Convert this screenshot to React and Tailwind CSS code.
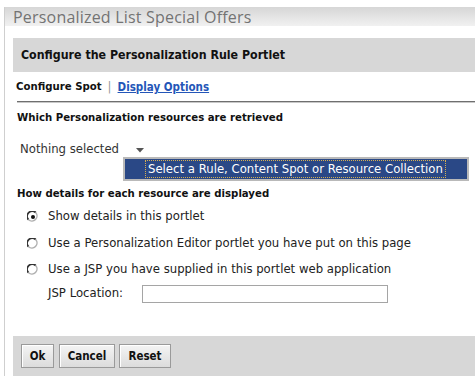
import React from "react";

function Radio({ checked }) {
  return (
    <svg width="12" height="12" viewBox="0 0 12 12" className="shrink-0">
      <circle cx="6" cy="6" r="5.5" fill="#fff" />
      <path d="M1.5 8.7 A5.1 5.1 0 0 1 8.7 1.5" fill="none" stroke="#333" strokeWidth="1.8" />
      <path d="M8.7 1.5 A5.1 5.1 0 0 1 1.5 8.7" fill="none" stroke="#b0b0b0" strokeWidth="1.5" />
      {checked && <circle cx="6" cy="6" r="2" fill="#111" />}
    </svg>
  );
}

function Btn({ children, w }) {
  return (
    <button
      className={`${w} h-[24px] border border-[#9a9a9a] bg-gradient-to-b from-[#f4f4f4] to-[#dcdcdc] text-[11.5px] font-bold text-[#111] leading-[22px] shadow-[inset_1px_1px_0_#fff] font-['DejaVu_Sans_Condensed','DejaVu_Sans',sans-serif]`}
    >
      {children}
    </button>
  );
}

const bold = "font-bold font-['DejaVu_Sans_Condensed','DejaVu_Sans',sans-serif] text-[11.3px]";

export default function App() {
  return (
    <div className="w-[475px] h-[376px] overflow-hidden bg-white font-['DejaVu_Sans',sans-serif] text-[11.7px] text-[#222]">
      <div className="mt-[7px] ml-[4px] border-l border-[#cfcfcf] h-[369px] flex flex-col">
        <div className="h-[20px] bg-gradient-to-b from-[#d6d6d6] to-[#f1f1f1] border-b border-white pl-[8px] text-[16px] leading-[20px] text-[#737373] font-['Open_Sans','DejaVu_Sans',sans-serif] tracking-[0.2px]">
          Personalized List Special Offers
        </div>
        <div className="pl-[8px] flex flex-col flex-1">
          <div className="mt-[11px] h-[34px] bg-[#d7d7d7] flex items-center pl-[8px] font-bold font-['DejaVu_Sans_Condensed','DejaVu_Sans',sans-serif] text-[12.3px] text-[#111]">
            Configure the Personalization Rule Portlet
          </div>
          <div className="h-[29px] flex items-center pl-[3px] gap-[6px] pt-[2px]">
            <span className={`${bold} text-[#111]`}>Configure Spot</span>
            <span className="text-[#999]">|</span>
            <span className={`${bold} text-[11.5px] text-[#2456b8] underline`}>Display Options</span>
          </div>
          <div className="ml-[4px] h-[2px] border-t border-[#6f6f6f] border-b border-b-[#c8c8c8]" />
          <div className={`h-[28px] flex items-center pl-[4px] pt-[3px] ${bold} text-[#111]`}>
            Which Personalization resources are retrieved
          </div>
          <div className="mt-[6px] h-[20px] flex items-center pl-[7px] pt-[6px]">
            <span className="text-[#333]">Nothing selected</span>
            <svg width="8" height="5" viewBox="0 0 8 5" className="ml-[17px]">
              <path d="M0 0 H8 L4 4.5 Z" fill="#555" />
            </svg>
          </div>
          <div className="ml-[110px] h-[24px] w-[346px] border-2 border-[#b9b9b9] bg-[#2a4886] flex items-center pl-[20px]">
            <span className="border border-dotted border-[#d8b050] px-[2px] h-[18px] leading-[16px] text-white whitespace-nowrap">
              Select a Rule, Content Spot or Resource Collection
            </span>
          </div>
          <div className={`h-[20px] flex items-center pl-[4px] pt-[6px] ${bold} text-[#111]`}>
            How details for each resource are displayed
          </div>
          <div className="mt-[3px] flex flex-col pl-[14px]">
            <div className="h-[26px] flex items-center gap-[9px]">
              <Radio checked />
              <span>Show details in this portlet</span>
            </div>
            <div className="h-[27px] flex items-center gap-[9px]">
              <Radio />
              <span>Use a Personalization Editor portlet you have put on this page</span>
            </div>
            <div className="h-[26px] flex items-center gap-[9px]">
              <Radio />
              <span>Use a JSP you have supplied in this portlet web application</span>
            </div>
            <div className="h-[22px] flex items-center pl-[21px]">
              <span className="w-[94px]">JSP Location:</span>
              <div className="w-[246px] h-[18px] border border-[#a5a5a5] bg-white" />
            </div>
          </div>
          <div className="mt-auto h-[40px] bg-[#d7d7d7] flex items-center pl-[8px]">
            <Btn w="w-[33px]">Ok</Btn>
            <div className="w-[5px]" />
            <Btn w="w-[56px]">Cancel</Btn>
            <div className="w-[4px]" />
            <Btn w="w-[52px]">Reset</Btn>
          </div>
        </div>
      </div>
    </div>
  );
}
